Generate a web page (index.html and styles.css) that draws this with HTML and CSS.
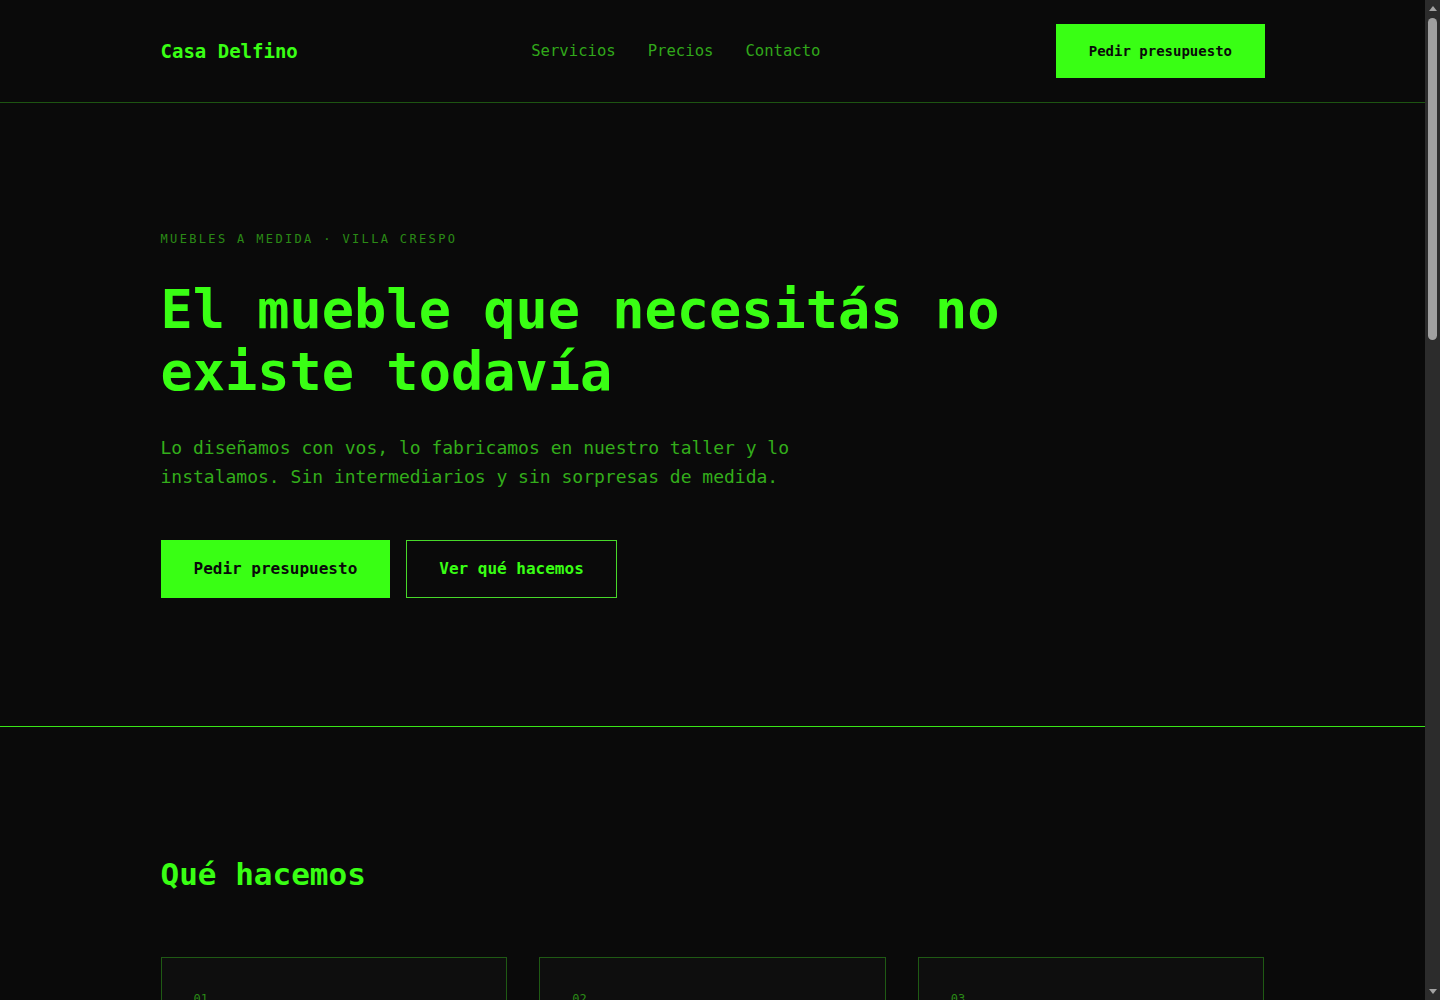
FILE: index.html
```html
<!DOCTYPE html>
<html lang="es">
<head>
<meta charset="utf-8">
<title>Casa Delfino — Muebles a medida</title>
<link rel="stylesheet" href="styles.css">
</head>
<body>
<div class="page">
<header class="site-header">
  <div class="container header-inner">
    <a class="logo" href="#">Casa Delfino</a>
    <nav class="nav">
      <a href="#servicios">Servicios</a>
      <a href="#precios">Precios</a>
      <a href="#contacto">Contacto</a>
    </nav>
    <a class="btn btn-header" href="#contacto">Pedir presupuesto</a>
  </div>
</header>

<section class="hero">
  <div class="container">
    <p class="eyebrow">MUEBLES A MEDIDA · VILLA CRESPO</p>
    <h1 class="hero-title">El mueble que necesitás no existe todavía</h1>
    <p class="hero-text">Lo diseñamos con vos, lo fabricamos en nuestro taller y lo instalamos. Sin intermediarios y sin sorpresas de medida.</p>
    <div class="hero-actions">
      <a class="btn btn-primary" href="#contacto">Pedir presupuesto</a>
      <a class="btn btn-outline" href="#servicios">Ver qué hacemos</a>
    </div>
  </div>
</section>

<section class="section" id="servicios">
  <div class="container">
    <h2 class="section-title">Qué hacemos</h2>
    <div class="cards">
      <article class="card">
        <span class="card-num">01</span>
        <h3 class="card-title">Diseño</h3>
        <p class="card-text">Medimos tu espacio y armamos planos y renders hasta que el mueble sea exactamente lo que imaginás.</p>
      </article>
      <article class="card">
        <span class="card-num">02</span>
        <h3 class="card-title">Fabricación</h3>
        <p class="card-text">Cortamos, armamos y terminamos cada pieza en nuestro taller de Villa Crespo, con materiales que elegís vos.</p>
      </article>
      <article class="card">
        <span class="card-num">03</span>
        <h3 class="card-title">Instalación</h3>
        <p class="card-text">Llevamos el mueble y lo instalamos en tu casa. Si algo no encaja, lo ajustamos en el momento.</p>
      </article>
    </div>
  </div>
</section>

<section class="section section-bordered" id="precios">
  <div class="container">
    <h2 class="section-title">Precios</h2>
    <div class="cards">
      <article class="card">
        <span class="card-num">Placard</span>
        <h3 class="card-title">desde $480.000</h3>
        <p class="card-text">Interior con estantes, cajones y barral. Melamina de 18 mm con cantos de PVC.</p>
      </article>
      <article class="card">
        <span class="card-num">Cocina</span>
        <h3 class="card-title">desde $1.200.000</h3>
        <p class="card-text">Bajo mesada y alacenas a medida, herrajes con cierre suave incluidos.</p>
      </article>
      <article class="card">
        <span class="card-num">Biblioteca</span>
        <h3 class="card-title">desde $350.000</h3>
        <p class="card-text">Estanterías de piso a techo, abiertas o con puertas, en madera o laqueado.</p>
      </article>
    </div>
  </div>
</section>

<section class="section section-bordered" id="contacto">
  <div class="container">
    <h2 class="section-title">Contacto</h2>
    <p class="hero-text">Contanos qué necesitás y te respondemos en menos de 48 horas con una primera cotización.</p>
    <div class="hero-actions">
      <a class="btn btn-primary" href="#">Pedir presupuesto</a>
      <a class="btn btn-outline" href="#">WhatsApp</a>
    </div>
  </div>
</section>

<footer class="site-footer">
  <div class="container footer-inner">
    <span>Casa Delfino · Villa Crespo, CABA</span>
    <span>© 2024</span>
  </div>
</footer>
</div>

<div class="fake-scrollbar" aria-hidden="true">
  <span class="sb-arrow sb-up"></span>
  <span class="sb-thumb"></span>
  <span class="sb-arrow sb-down"></span>
</div>
</body>
</html>
```

FILE: styles.css
```css
* { box-sizing: border-box; }

html, body {
  margin: 0;
  padding: 0;
}

body {
  background: #0a0a0a;
  color: #39ff14;
  font-family: "DejaVu Sans Mono", "Liberation Mono", monospace;
}

.page {
  margin-right: 15px;
}

a { text-decoration: none; color: inherit; }

.container {
  max-width: 1104px;
  margin: 0 auto;
}

/* Header */
.site-header {
  border-bottom: 1px solid #1d5412;
}

.header-inner {
  height: 102px;
  display: flex;
  align-items: center;
  justify-content: space-between;
}

.logo {
  font-size: 19px;
  font-weight: bold;
  color: #39ff14;
  width: 300px;
}

.nav {
  display: flex;
  gap: 32px;
  font-size: 15.6px;
  margin-left: 66px;
}

.nav a { color: #31a81a; }

.btn {
  display: inline-block;
  font-weight: bold;
  border: 1px solid #39ff14;
  white-space: nowrap;
}

.btn-header {
  background: #39ff14;
  color: #0a0a0a;
  font-size: 14px;
  line-height: 18px;
  padding: 17px 31.5px;
  text-align: center;
  margin-left: 231px;
}

/* Hero */
.hero {
  padding: 128px 0 128px;
  border-bottom: 1px solid #39e617;
}

.eyebrow {
  margin: 0 0 31px;
  font-size: 12px;
  line-height: 17px;
  letter-spacing: 2.35px;
  color: #2a8a16;
}

.hero-title {
  margin: 0 0 31px;
  max-width: 900px;
  font-size: 53.6px;
  line-height: 62px;
  font-weight: bold;
  color: #39ff14;
}

.hero-text {
  margin: 0 0 48px;
  max-width: 640px;
  font-size: 18px;
  line-height: 28.8px;
  color: #33ad1b;
}

.hero-actions {
  display: flex;
  gap: 16px;
}

.btn-primary,
.btn-outline {
  font-size: 16px;
  line-height: 22px;
  padding: 17px 32px;
}

.btn-primary {
  background: #39ff14;
  color: #0a0a0a;
}

.btn-outline {
  background: transparent;
  color: #39ff14;
  border-color: #47d92a;
}

/* Sections */
.section {
  padding: 129px 0 128px;
}

.section-bordered {
  border-top: 1px solid #1d5412;
}

.section-title {
  margin: 0 0 64px;
  font-size: 31px;
  line-height: 37px;
  font-weight: bold;
  color: #39ff14;
}

#contacto .section-title { margin-bottom: 32px; }

.cards {
  display: grid;
  grid-template-columns: repeat(3, 1fr);
  gap: 32px;
}

.card {
  background: #0e0e0e;
  border: 1px solid #1f5a14;
  padding: 32px;
  min-height: 260px;
}

.card-num {
  display: block;
  font-size: 12px;
  line-height: 18px;
  color: #2a8a16;
  margin-bottom: 24px;
}

.card-title {
  margin: 0 0 16px;
  font-size: 20px;
  line-height: 28px;
  color: #39ff14;
}

.card-text {
  margin: 0;
  font-size: 15px;
  line-height: 24px;
  color: #33ad1b;
}

/* Footer */
.site-footer {
  border-top: 1px solid #1d5412;
}

.footer-inner {
  height: 96px;
  display: flex;
  align-items: center;
  justify-content: space-between;
  font-size: 13px;
  color: #2a8a16;
}

/* Decorative scrollbar drawn to match the reference window chrome */
.fake-scrollbar {
  position: fixed;
  top: 0;
  right: 0;
  bottom: 0;
  width: 15px;
  background: #2c2c2c;
  display: flex;
  flex-direction: column;
  align-items: center;
}

.sb-arrow {
  width: 0;
  height: 0;
  border-left: 4px solid transparent;
  border-right: 4px solid transparent;
}

.sb-up {
  margin-top: 6px;
  border-bottom: 5px solid #a3a3a3;
}

.sb-down {
  margin-top: auto;
  margin-bottom: 6px;
  border-top: 5px solid #a3a3a3;
}

.sb-thumb {
  margin-top: 7px;
  width: 9px;
  height: 322px;
  border-radius: 5px;
  background: #a0a0a0;
}
```
